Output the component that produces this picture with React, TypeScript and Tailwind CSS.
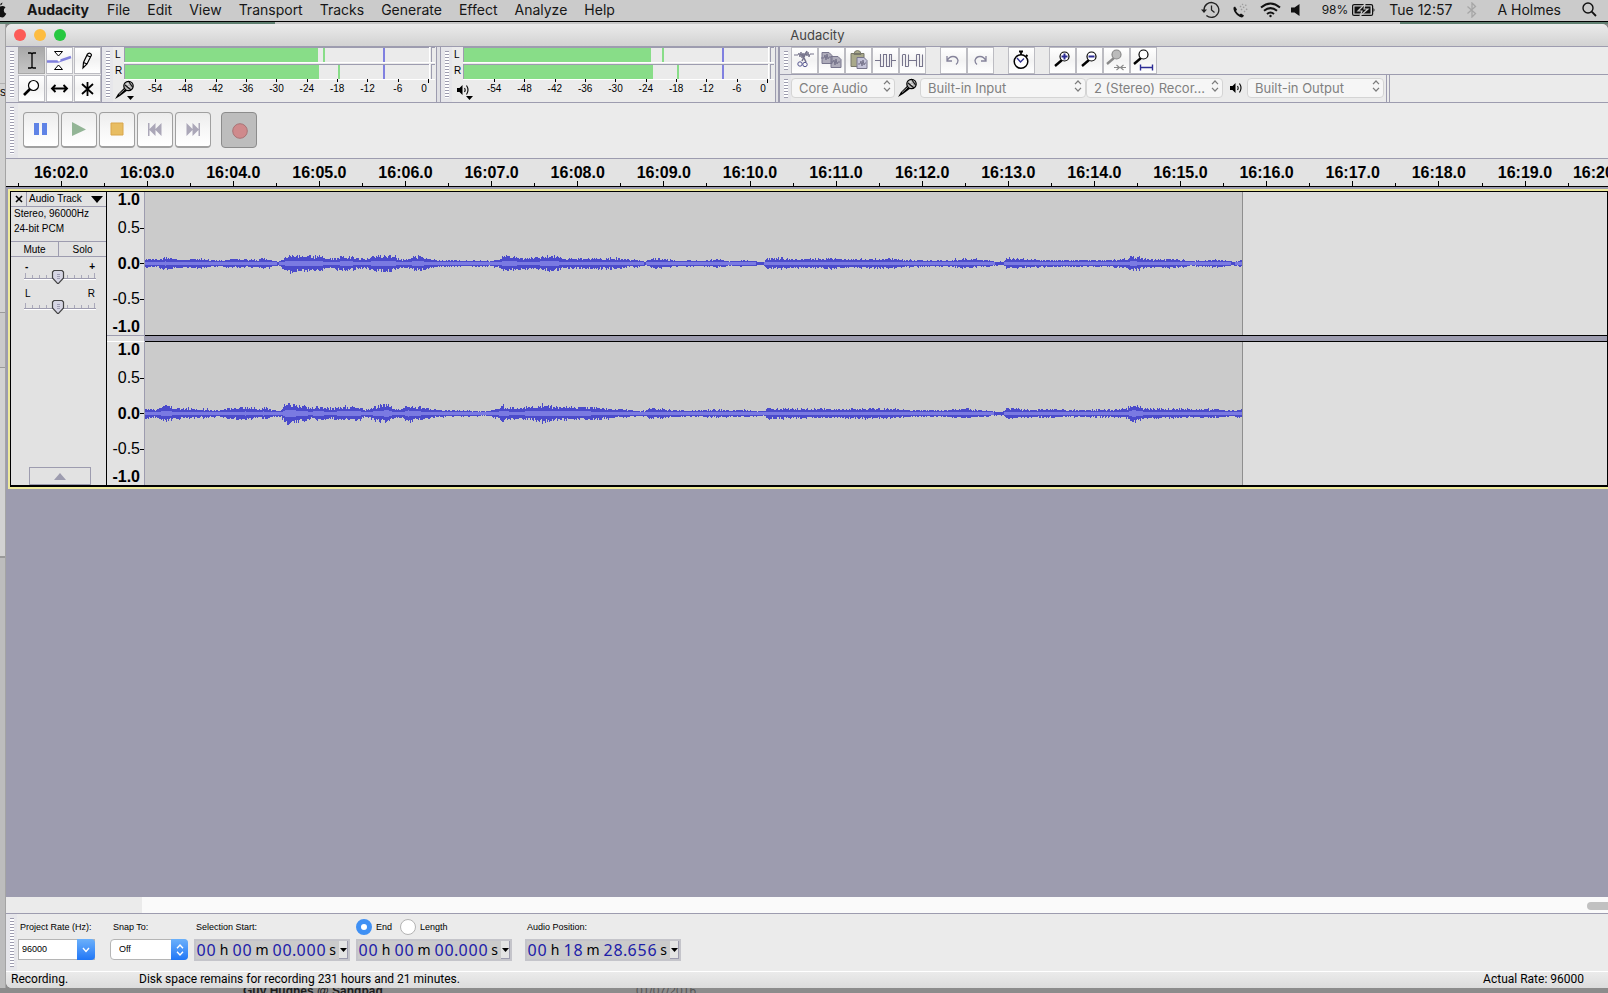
import React from 'react';

const PITCH = 86.12;
const DB_PITCH = 30.33;
const WAVE_WIDTH = 1097;

const MENUS = ['File', 'Edit', 'View', 'Transport', 'Tracks', 'Generate', 'Effect', 'Analyze', 'Help'];
const DB_LABELS = ['-54', '-48', '-42', '-36', '-30', '-24', '-18', '-12', '-6', '0'];
const TIMES = Array.from({ length: 18 }, (_, i) => `16:${String(i + 2).padStart(2, '0')}.0`);

type Point = [number, number];

// [x, half height] control points of the visible audio
const LEFT_ENVELOPE: Point[] = [
  [0, 4], [12, 3.5], [20, 6], [32, 4], [60, 4], [74, 2.5], [84, 4], [105, 4], [112, 3], [118, 5.5], [126, 3], [133, 1.5], [137, 5],
  [145, 8], [175, 7], [182, 4.5], [190, 5], [200, 7], [215, 5], [220, 4], [228, 7], [245, 8], [255, 4], [262, 4], [270, 7.5],
  [283, 5], [290, 3], [320, 2.5], [335, 3], [345, 2], [352, 3.5], [360, 7.5], [378, 5], [395, 6], [405, 8], [418, 5], [440, 5],
  [455, 4.5], [475, 5], [485, 3], [490, 3.5], [500, 1.5], [508, 5], [518, 4], [530, 2.5], [560, 2.5], [575, 3.5], [585, 2], [600, 3],
  [618, 1], [622, 5], [650, 4], [680, 5], [705, 4], [745, 4.5], [765, 3], [800, 2.5], [820, 4.5], [840, 3], [852, 1.5], [858, 1.5],
  [861, 5], [885, 3.5], [920, 3], [960, 3], [980, 4], [987, 7], [1000, 4], [1030, 4], [1045, 2], [1070, 3.5], [1080, 2.5], [1088, 1.5],
  [1094, 2.5], [1097, 2.5],
];
const RIGHT_ENVELOPE: Point[] = [
  [0, 5], [10, 3.5], [20, 8], [30, 5], [55, 4], [75, 3], [82, 5], [100, 6], [115, 3.5], [118, 6], [130, 2.5], [136, 3], [141, 11],
  [146, 9], [160, 7], [165, 5], [171, 7], [185, 5], [195, 6.5], [215, 6.5], [220, 3], [230, 7], [243, 9], [249, 4], [256, 4],
  [263, 8.5], [275, 6], [295, 3], [335, 2.2], [345, 2], [356, 7], [370, 5], [400, 8], [415, 6], [445, 6], [460, 5], [485, 3],
  [500, 2], [505, 5], [518, 4], [540, 2.5], [570, 3.5], [600, 3], [618, 2], [622, 5], [660, 4.5], [690, 4], [745, 5], [765, 3],
  [800, 3], [820, 4.5], [852, 1.5], [858, 1.5], [861, 5], [885, 3.5], [910, 4], [925, 3], [960, 3.5], [980, 4], [988, 9], [1000, 5],
  [1030, 4], [1070, 4], [1087, 2.5], [1097, 4],
];

function envelopeAt(points: Point[], x: number) {
  const i = points.findIndex((p) => p[0] >= x);
  if (i <= 0) return points[0][1];
  const [x0, y0] = points[i - 1];
  const [x1, y1] = points[i];
  return y0 + ((y1 - y0) * (x - x0)) / (x1 - x0);
}

function noise(n: number) {
  const v = Math.sin(n * 127.1 + 11.7) * 43758.5453;
  return v - Math.floor(v);
}

function wavePaths(points: Point[], seed: number) {
  let peak = '';
  let rms = '';
  for (let x = 0; x < WAVE_WIDTH; x++) {
    const h = envelopeAt(points, x);
    const spike = noise(x * 7 + seed) > 0.92 ? 1.2 : 1;
    const up = Math.max(1, Math.round(h * spike * (0.6 + 0.5 * noise(x + seed))));
    const down = Math.max(1, Math.round(h * spike * (0.6 + 0.5 * noise(x * 3 + seed + 500))));
    const r = h < 1.8 ? 0 : Math.max(2, Math.min(4, Math.round(h * 0.42)));
    peak += `M${x + 0.5} ${71 - up}V${72 + down}`;
    if (r) rms += `M${x + 0.5} ${72 - r}V${71 + r}`;
  }
  return { peak, rms };
}

function Grip({ className = '' }: { className?: string }) {
  return (
    <div className={`flex shrink-0 justify-center bg-[#e6e6ea] py-1 ${className}`}>
      <div className="w-1 bg-[repeating-linear-gradient(to_bottom,#9d9caf_0px,#9d9caf_1px,#ffffff_1px,#ffffff_3px)]" />
    </div>
  );
}

function ToolButton({ label, active, children }: { label: string; active?: boolean; children: React.ReactNode }) {
  return (
    <button
      type="button"
      aria-label={label}
      className={`flex h-[27px] w-[27px] shrink-0 items-center justify-center border ${
        active ? 'border-[#a8a8a8] bg-linear-to-b from-[#a9a9a9] to-[#c6c6c6]' : 'border-[#bcbcc2] bg-linear-to-b from-white via-[#f3f3f3] to-white'
      }`}
    >
      <svg width="25" height="25" viewBox="0 0 25 25" fill="none" stroke="#000" strokeWidth="1.4">
        {children}
      </svg>
    </button>
  );
}

function TransportButton({ label, children }: { label: string; children: React.ReactNode }) {
  return (
    <button
      type="button"
      aria-label={label}
      className="flex h-9 w-9 items-center justify-center rounded border border-b-2 border-[#a0a0a0] bg-linear-to-b from-[#ececec] via-[#f7f7f7] to-white"
    >
      <svg width="24" height="24" viewBox="0 0 24 24">
        {children}
      </svg>
    </button>
  );
}

function MicIcon() {
  return (
    <svg width="21" height="20" viewBox="0 0 21 20" className="shrink-0">
      <path d="M1 19 L4 14 L11 7 L14 10 L6 16 Z" fill="#000" />
      <path d="M5 14.5 L11 9" stroke="#999" strokeWidth="1" />
      <circle cx="14.5" cy="6" r="4.7" fill="#b5b5b5" stroke="#000" strokeWidth="1.2" />
      <path d="M11 5l6 5M15 2l3.500 5" stroke="#111" strokeWidth="1.2" />
      <path d="M12.500 4h2M14.500 6.500h1" stroke="#fff" strokeWidth="1.2" />
    </svg>
  );
}

function SpeakerIcon() {
  return (
    <svg width="14" height="14" viewBox="0 0 14 14">
      <path d="M1 5h2.5L6.5 2v10L3.500 9H1z" fill="#000" />
      <path d="M8.500 5q1.300 2 0 4M10.500 2.500q3 4.500 0 9" fill="none" stroke="#000" strokeWidth="1.100" />
    </svg>
  );
}

type MeterProps = {
  label: string;
  icon: React.ReactNode;
  levels: [number, number];
  holds: [number, number];
  peak: number;
};

function Meter({ label, icon, levels, holds, peak }: MeterProps) {
  return (
    <section aria-label={label} className="flex w-[335px] shrink-0 border-r border-[#9d9caf]">
      <Grip className="w-[11px]" />
      <div className="flex flex-col">
        <div className="flex">
          <div className="flex w-[11px] flex-col pl-0.5 text-[10px] leading-[16px]">
            <span>L</span>
            <span>R</span>
          </div>
          <svg width="311" height="36" viewBox="0 0 311 36" shapeRendering="crispEdges">
            {[0, 17].map((y, i) => (
              <g key={y}>
                <path d={`M0.500 ${y + 15}V${y + 0.5}H305M307.500 ${y + 15}V${y + 0.5}H311`} stroke="#9d9caf" fill="none" />
                <path d={`M0 ${y + 15.5}H311M305.500 ${y}V${y + 16}`} stroke="#fff" strokeWidth="1" />
                <rect x="1" y={y + 1} width={levels[i]} height="14" fill="#88dd88" />
                <rect x={holds[i]} y={y + 1} width="2" height="14" fill="#88dd88" />
                <rect x={peak} y={y + 1} width="2" height="14" fill="#8080e0" />
              </g>
            ))}
            {DB_LABELS.map((db, i) => (
              <rect key={db} x={Math.round(31 + i * DB_PITCH)} y="32" width="1" height={i === 9 ? 4 : 3} fill="#000" />
            ))}
          </svg>
        </div>
        <div className="flex">
          <button type="button" aria-label={`${label} options`} className="flex h-[17px] w-[27px] items-end pl-px">
            {icon}
            <svg width="7" height="4" viewBox="0 0 7 4" className="-ml-2 shrink-0">
              <path d="M0 0h7L3.500 4z" fill="#000" />
            </svg>
          </button>
          <div className="flex text-[10px] leading-[11px]">
            {DB_LABELS.map((db) => (
              <span key={db} className="text-center last:pr-2" style={{ width: DB_PITCH }}>
                {db}
              </span>
            ))}
          </div>
        </div>
      </div>
    </section>
  );
}

function DeviceSelect({ label, value, className }: { label: string; value: string; className: string }) {
  return (
    <div className={`relative shrink-0 ${className}`}>
      <select
        aria-label={label}
        className="h-5 w-full appearance-none rounded border border-[#d4d4d4] bg-[#f6f6f6] pl-[7px] font-[Inter,sans-serif] text-[13px] leading-4 text-[#808080]"
      >
        <option>{value}</option>
      </select>
      <svg width="8" height="12" viewBox="0 0 8 12" className="pointer-events-none absolute top-1 right-1" fill="none" stroke="#7c7c7c" strokeWidth="1.200">
        <path d="M1 4.200L4 1l3 3.200M1 7.800L4 11l3-3.200" />
      </svg>
    </div>
  );
}

function Lens({ muted }: { muted?: boolean }) {
  return (
    <>
      <path d="M5 18L12 12" stroke={muted ? '#888' : '#000'} strokeWidth="2.400" />
      <circle cx="14.500" cy="8.500" r="4.500" fill={muted ? '#bbb' : '#fff'} stroke={muted ? '#888' : '#000'} strokeWidth="1.200" />
    </>
  );
}

function EditToolbar() {
  return (
    <div className="flex h-[28px] border-b border-[#9d9caf]">
      <Grip className="w-[11px]" />
      <div className="flex gap-[14px]">
        <div className="flex">
          <ToolButton label="Cut">
            <g stroke="#77758c" strokeWidth="1">
              <path d="M2 7h4l1-2 1 4 1-5 1 6 1-5 1 4 1-4h1l1 3 1-4 1 5 1-3h4" />
              <path d="M15 3l-5 10M10 6l4 8" strokeWidth="1.600" />
              <circle cx="8" cy="16" r="2.200" stroke="#55558f" />
              <circle cx="13" cy="16.500" r="2.200" stroke="#55558f" />
            </g>
          </ToolButton>
          <ToolButton label="Copy">
            <g stroke="#77758c" strokeWidth="1" fill="#aeacba">
              <path d="M3 4.500h7l3 3v8H3zM12 8.500h7l3 3v8H12z" />
              <path d="M2 10h3l1-3 1 5 1-6 1 5 1-2h2M12 14h2l1-2 1 5 1-6 1 5 1-2h2" fill="none" />
            </g>
          </ToolButton>
          <ToolButton label="Paste">
            <g stroke="#77776a" strokeWidth="1" fill="#a9a98a">
              <path d="M5 5.500h13v13H5zM8 6.500q0-4 3.500-4t3.500 4z" />
              <path d="M11 9.500h7l3 3v8H11z" fill="#c4c3d8" stroke="#77758c" />
              <path d="M12 16h2l1-3 1 5 1-6 1 5 1-2h1" fill="none" stroke="#77758c" />
            </g>
          </ToolButton>
          <ToolButton label="Trim">
            <path d="M2 12.500h5M19 12.500h4M7.500 6v13M10.500 6v13M13.500 6v13M16.500 6v13M18.500 6v13M7.500 18.500h3M10.500 6.500h3M13.500 18.500h3M16.500 6.500h2" stroke="#77758c" strokeWidth="1.100" />
          </ToolButton>
          <ToolButton label="Silence">
            <path d="M2.500 7v11M2.500 6.500h3M5.500 6.500v12h3M8.500 18.500v-12M8.500 12.500h8M16.500 6.500v12M16.500 6.500h3v12h3v-12" stroke="#77758c" strokeWidth="1.100" />
          </ToolButton>
        </div>
        <div className="flex">
          <ToolButton label="Undo">
            <path d="M6 8v5h5M6 13q2-4.500 6-4.500t5 4q0 2.500-2 4" stroke="#85839a" strokeWidth="1.300" />
          </ToolButton>
          <ToolButton label="Redo">
            <path d="M18 8v5h-5M18 13q-2-4.500-6-4.500t-5 4q0 2.500 2 4" stroke="#85839a" strokeWidth="1.300" />
          </ToolButton>
        </div>
        <ToolButton label="Sync lock">
          <circle cx="12" cy="13.500" r="6.800" fill="#fff" strokeWidth="1.500" />
          <path d="M10 3.500h4M12 4v3M17 7l1.500 1.500" strokeWidth="1.800" />
          <path d="M8 10l3.500 4L15 10.500" stroke="#33338f" />
        </ToolButton>
        <div className="flex">
          <ToolButton label="Zoom in">
            <Lens />
            <path d="M11.500 8.500h6M14.500 5.500v6" stroke="#2c2c94" strokeWidth="2" />
          </ToolButton>
          <ToolButton label="Zoom out">
            <Lens />
            <path d="M11.500 8.500h6" stroke="#2c2c94" strokeWidth="2" />
          </ToolButton>
          <ToolButton label="Fit selection">
            <g transform="translate(-2 -2)">
              <Lens muted />
            </g>
            <path d="M10 19.500h5M12.500 17l3 2.500-3 2.500M22 19.500h-5M19.500 17l-3 2.500 3 2.500" stroke="#888" strokeWidth="1.100" />
          </ToolButton>
          <ToolButton label="Fit project">
            <g transform="translate(-2 -2)">
              <Lens />
            </g>
            <path d="M9.500 16.500v6M21.500 16.500v6M9 19.500h13" stroke="#2c2c94" strokeWidth="1.400" />
          </ToolButton>
        </div>
      </div>
    </div>
  );
}

function TimeField({ label, value }: { label: string; value: [string, string, string, string] }) {
  const digits = (text: string) =>
    text.split('').map((d, i) => (
      <span key={i} className="w-[10px] text-center text-[#2020a8]">
        {d}
      </span>
    ));
  return (
    <div role="group" aria-label={label} className="flex h-[22px] w-[156px] items-center border-2 border-[#c4c4ca] bg-[#cbcbcb] font-['Noto_Sans',sans-serif] text-[16px] leading-[18px]">
      {digits(value[0])}
      <span className="w-4 text-center text-[14px]">h</span>
      {digits(value[1])}
      <span className="w-5 text-center text-[14px]">m</span>
      {digits(value[2])}
      <span className="w-1 text-center text-[#2020a8]">.</span>
      {digits(value[3])}
      <span className="w-[13px] text-center text-[14px]">s</span>
      <button type="button" aria-label={`${label} format`} className="flex h-[18px] flex-1 items-center justify-center border-r border-b border-[#9d9caf] bg-[#e4e4e4]">
        <svg width="7" height="4" viewBox="0 0 7 4">
          <path d="M0 0h7L3.500 4z" fill="#000" />
        </svg>
      </button>
    </div>
  );
}

function TrackSlider({ label, low, high, labelClass }: { label: string; low: string; high: string; labelClass: string }) {
  return (
    <div className="flex h-[30px] flex-col pr-[10px] pl-[13px]">
      <div className={`flex h-[10px] justify-between px-px text-[10px] ${labelClass}`}>
        <span>{low}</span>
        <span>{high}</span>
      </div>
      <div className="relative w-[72px]">
        <svg width="72" height="16" viewBox="0 0 72 16">
          <path d="M1.500 4v5M8.500 6v3M15.500 6v3M22.500 6v3M29.500 6v3M43.500 6v3M50.500 6v3M57.500 6v3M64.500 6v3M70.500 4v5" stroke="#aaa9ba" />
          <path d="M0 9.500h72" stroke="#9d9caf" />
          <path d="M0 10.500h72" stroke="#fff" />
          <path d="M30 1.500h8l1.500 1.500v6l-5 5.500h-1l-5-5.500V3z" fill="#d6d6e4" stroke="#444" strokeWidth="1.200" />
          <path d="M33 5.500h3M33 7.500h3M33 9.500h3" stroke="#8f8ea6" strokeWidth="0.800" />
        </svg>
        <input
          type="range"
          aria-label={label}
          defaultValue={47}
          className="absolute inset-0 h-4 w-full appearance-none bg-transparent [&::-webkit-slider-thumb]:h-4 [&::-webkit-slider-thumb]:w-3 [&::-webkit-slider-thumb]:appearance-none"
        />
      </div>
    </div>
  );
}

function TrackPanel() {
  return (
    <div className="flex w-[96px] shrink-0 flex-col border-r border-black bg-[#e2e2e2] text-[10px]">
      <div className="flex h-[15px] border-b border-[#9d9caf]">
        <button type="button" aria-label="Close track" className="flex w-4 items-center justify-center border-r border-[#9d9caf]">
          <svg width="8" height="8" viewBox="0 0 8 8">
            <path d="M1 1l6 6M7 1L1 7" stroke="#000" strokeWidth="1.600" />
          </svg>
        </button>
        <button type="button" className="flex flex-1 items-center justify-between pr-[3px] pl-0.5 leading-[14px]">
          Audio Track
          <svg width="12" height="7" viewBox="0 0 12 7">
            <path d="M0 0h12L6 7z" fill="#000" />
          </svg>
        </button>
      </div>
      <p className="pl-[3px] leading-[13px]">Stereo, 96000Hz</p>
      <p className="h-[21px] pl-[3px] leading-[18px]">24-bit PCM</p>
      <div className="flex h-4 border-y border-[#9d9caf]">
        <button type="button" className="flex-1 border-r border-[#9d9caf] leading-[13px]">Mute</button>
        <button type="button" className="flex-1 leading-[13px]">Solo</button>
      </div>
      <div className="pt-0.5">
        <TrackSlider label="Gain" low="-" high="+" labelClass="font-bold leading-4" />
        <TrackSlider label="Pan" low="L" high="R" labelClass="leading-[10px]" />
      </div>
      <button type="button" aria-label="Collapse track" className="mt-auto mr-[15px] ml-[18px] flex h-[18px] items-center justify-center border border-[#9d9caf]">
        <svg width="12" height="7" viewBox="0 0 12 7">
          <path d="M6 0l6 7H0z" fill="#9d9caf" />
        </svg>
      </button>
    </div>
  );
}

function ScaleMark({ value, bold, tick }: { value: string; bold?: boolean; tick?: boolean }) {
  return (
    <div className="flex items-center justify-end">
      <span className={bold ? 'font-bold' : ''}>{value}</span>
      <span className={tick ? 'h-px w-1 bg-black' : 'w-1'} />
    </div>
  );
}

function Channel({ name, points, seed }: { name: string; points: Point[]; seed: number }) {
  const { peak, rms } = wavePaths(points, seed);
  return (
    <div className="flex h-[143px]">
      <div className="grid w-[38px] shrink-0 grid-rows-[16px_40px_31px_40px_16px] border-r border-[#9d9caf] bg-[#e2e2e2] text-[16px] leading-4">
        <ScaleMark value="1.0" bold />
        <ScaleMark value="0.5" tick />
        <ScaleMark value="0.0" bold tick />
        <ScaleMark value="-0.5" tick />
        <ScaleMark value="-1.0" bold />
      </div>
      <div className="shrink-0 border-r border-[#8f8f8f] bg-[#cbcbcb]">
        <svg role="img" aria-label={name} width={WAVE_WIDTH} height="143" viewBox={`0 0 ${WAVE_WIDTH} 143`} shapeRendering="crispEdges">
          <path d={peak} stroke="#4b4bcb" />
          <path d={rms} stroke="#7a7ae2" />
        </svg>
      </div>
      <div className="flex-1 bg-[#dedede]" />
    </div>
  );
}

function Ruler() {
  return (
    <div className="flex h-[28px] shrink-0 flex-col justify-between overflow-hidden border-b border-black bg-[#e3e3e3]">
      <div className="flex pt-[5px] pl-[12px] text-[16px] leading-[18px] font-bold">
        {TIMES.map((t) => (
          <span key={t} className="shrink-0 text-center" style={{ width: PITCH }}>
            {t}
          </span>
        ))}
        <span className="shrink-0 pl-[5px]">16:20.0</span>
      </div>
      <svg width="1660" height="5" viewBox="0 0 1660 5" shapeRendering="crispEdges" className="-mt-2 shrink-0">
        {Array.from({ length: 38 }, (_, i) => (
          <rect key={i} x={Math.floor(12 + (i * PITCH) / 2)} y={i % 2 ? 0 : 2} width="1" height="5" fill="#000" />
        ))}
      </svg>
    </div>
  );
}

function MenuBar() {
  return (
    <header className="flex h-[22px] shrink-0 items-center border-b border-black bg-[#cbcbcb] pb-0.5 font-[Inter,sans-serif] text-[14px] leading-5 text-[#161616]">
      <svg width="7" height="16" viewBox="0 0 7 16" className="shrink-0">
        <path d="M0 4.500q3-1.500 5.500.8Q3.500 7 3.800 8.800 4 10.600 6.300 11.800 4.500 15.500 2.300 15.500L0 15z" fill="#111" />
        <path d="M0 3.500Q.3 1.200 2.500.5 2.500 2.800 0 3.500z" fill="#111" />
      </svg>
      <nav className="flex gap-[17px] pl-5">
        <a href="#audacity" className="pr-px font-bold">Audacity</a>
        {MENUS.map((m) => (
          <a key={m} href={`#${m.toLowerCase()}`}>{m}</a>
        ))}
      </nav>
      <div className="ml-auto flex items-center pr-[11px]">
        <svg width="19" height="18" viewBox="0 0 19 18" fill="none" stroke="#222" strokeWidth="1.300">
          <path d="M3 9a7.400 7.400 0 1 1 2.400 5.400" />
          <path d="M0 8.500h6L3 12z" fill="#222" stroke="none" />
          <path d="M10.500 4.500V9l3 2.500" />
        </svg>
        <svg width="17" height="18" viewBox="0 0 17 18" className="ml-3">
          <path d="M1.500 6.500l1.500-1 2 3-1 1.500q1.500 2.500 3.500 3.500l1.500-1 3 2-1 1.500Q9 17.500 5 14 1 10 1.500 6.500z" fill="#111" />
          <path d="M9 9l6-6M8 6l3-3M12 11l4-4" stroke="#9c9c9c" strokeWidth="1.300" strokeDasharray="1.500 1.500" />
        </svg>
        <svg width="21" height="16" viewBox="0 0 21 16" fill="none" stroke="#111" strokeWidth="2" className="ml-[11px]">
          <path d="M1 5.500q9.500-8 19 0M4 8.800q6.500-5.400 13 0M7 12q3.500-2.900 7 0" />
          <circle cx="10.500" cy="14" r="1.200" fill="#111" stroke="none" />
        </svg>
        <svg width="10" height="12" viewBox="0 0 10 12" className="ml-[10px]">
          <path d="M0 3.500h3.500L8.500 0v12L3.500 8.500H0z" fill="#111" />
        </svg>
        <span className="ml-[21px] text-[12px]">98%</span>
        <svg width="24" height="14" viewBox="0 0 24 14" className="ml-1">
          <rect x="0.600" y="1.600" width="20" height="10.800" rx="1.500" fill="none" stroke="#111" strokeWidth="1.200" />
          <rect x="2.500" y="3.500" width="16" height="7" fill="#111" />
          <path d="M21.500 5q2 2 0 4z" fill="#111" />
          <path d="M13 1l-7 7h4l-2 5 8-7h-4z" fill="#111" stroke="#cbcbcb" strokeWidth="1.200" />
        </svg>
        <span className="ml-[13px]">Tue 12:57</span>
        <svg width="12" height="16" viewBox="0 0 12 16" fill="none" stroke="#a6a6a6" strokeWidth="1.300" className="ml-[14px]">
          <path d="M1.500 4.500l8 7L6 15V1l3.500 3.500-8 7" />
        </svg>
        <span className="ml-[19px]">A Holmes</span>
        <svg width="15" height="15" viewBox="0 0 15 15" fill="none" stroke="#111" strokeWidth="1.400" className="ml-[21px]">
          <circle cx="6" cy="6" r="5" />
          <path d="M9.700 9.700L14 14" strokeWidth="1.800" />
        </svg>
      </div>
    </header>
  );
}

function SelectionBar() {
  return (
    <div className="flex h-[58px] shrink-0 border-t border-[#9d9caf] text-[9px] leading-[11px]">
      <Grip className="w-[11px]" />
      <div className="flex items-start pt-[5px] pl-px">
        <div className="flex w-[77px] flex-col gap-1">
          <label htmlFor="rate" className="h-4 pl-0.5 leading-4">Project Rate (Hz):</label>
          <div className="flex h-[21px] border border-[#b5b5b5] bg-white">
            <input id="rate" defaultValue="96000" className="w-[58px] pl-[3px]" />
            <button type="button" aria-label="Choose rate" className="-my-px -mr-px flex flex-1 items-center justify-center rounded-r bg-linear-to-b from-[#6bb0fa] to-[#1f76f6]">
              <svg width="8" height="6" viewBox="0 0 8 6" fill="none" stroke="#fff" strokeWidth="1.400">
                <path d="M1 1l3 3.500L7 1" />
              </svg>
            </button>
          </div>
        </div>
        <div className="ml-[15px] flex w-[78px] flex-col gap-1">
          <label htmlFor="snap" className="h-4 pl-[3px] leading-4">Snap To:</label>
          <div className="relative flex">
            <select id="snap" className="h-[21px] w-full appearance-none rounded border border-[#b5b5b5] bg-white pl-2">
              <option>Off</option>
            </select>
            <div className="pointer-events-none absolute top-0 right-0 flex h-[21px] w-[17px] items-center justify-center rounded-r bg-linear-to-b from-[#6bb0fa] to-[#1f76f6]">
              <svg width="8" height="12" viewBox="0 0 8 12" fill="none" stroke="#fff" strokeWidth="1.400">
                <path d="M1 4.200L4 1l3 3.200M1 7.800L4 11l3-3.200" />
              </svg>
            </div>
          </div>
        </div>
        <div className="ml-1.5 flex flex-col gap-1">
          <span className="h-4 pl-0.5 leading-4">Selection Start:</span>
          <TimeField label="Selection start" value={['00', '00', '00', '000']} />
        </div>
        <div className="ml-1.5 flex flex-col gap-1">
          <div className="flex h-4 items-center">
            <input id="end" type="radio" name="mode" defaultChecked className="h-4 w-4 appearance-none rounded-full border border-[#b4b4b4] bg-white checked:border-[5px] checked:border-[#3f90f4]" />
            <label htmlFor="end" className="pl-1">End</label>
            <input id="length" type="radio" name="mode" className="ml-2 h-4 w-4 appearance-none rounded-full border border-[#b4b4b4] bg-white checked:border-[5px] checked:border-[#3f90f4]" />
            <label htmlFor="length" className="pl-1">Length</label>
          </div>
          <TimeField label="Selection end" value={['00', '00', '00', '000']} />
        </div>
        <div className="ml-[13px] flex flex-col gap-1">
          <span className="h-4 pl-0.5 leading-4">Audio Position:</span>
          <TimeField label="Audio position" value={['00', '18', '28', '656']} />
        </div>
      </div>
    </div>
  );
}

export default function App() {
  return (
    <div className="flex h-screen flex-col overflow-hidden bg-[#8c8c8c] font-['Liberation_Sans',Arial,sans-serif] text-black">
      <MenuBar />
      <div className="flex h-0.5 shrink-0">
        <div className="w-[275px] bg-[#5f7f70]" />
        <div className="flex-1 bg-[#c8c8c8]" />
        <div className="w-[208px] bg-[#5f7f70]" />
      </div>
      <div className="flex min-h-0 flex-1">
        {/* sliver of the window behind */}
        <div className="flex w-1.5 shrink-0 flex-col overflow-hidden border-r border-[#a4a4a4] bg-[#d2d2d2] text-[12px] leading-4">
          <div className="h-[60px] border-b border-[#b0b0b0]" />
          <span className="h-[228px]">s</span>
          <div className="h-[56px] border-y border-[#9a9a9a] bg-[#cacaca]" />
          <div className="h-[190px] border-b-2 border-[#9a9a9a]" />
          <div className="flex-1 bg-[#bdbdbd]" />
        </div>
        <main className="flex min-w-0 flex-1 flex-col overflow-hidden rounded-t-md rounded-bl-md bg-[#ebebeb]">
          <div className="flex h-[23px] shrink-0 items-center border-b border-[#9d9caf] bg-linear-to-b from-[#ebebeb] to-[#d2d2d2]">
            <div className="flex w-[60px] gap-2 pl-2">
              <button type="button" aria-label="Close" className="h-3 w-3 rounded-full bg-[#fc5b57]" />
              <button type="button" aria-label="Minimize" className="h-3 w-3 rounded-full bg-[#fdbc40]" />
              <button type="button" aria-label="Zoom" className="h-3 w-3 rounded-full bg-[#27c840]" />
            </div>
            <h1 className="flex-1 pr-[39px] text-center font-[Inter,sans-serif] text-[13px] leading-5 text-[#444]">Audacity</h1>
          </div>

          <div className="flex h-14 shrink-0 border-b border-[#9d9caf]">
            <div className="flex w-[96px] shrink-0 border-r border-[#9d9caf]">
              <Grip className="w-3" />
              <div className="grid grid-cols-3 gap-px">
                <ToolButton label="Selection tool" active>
                  <path d="M9 5h3l1 1 1-1h3M9 20h3l1-1 1 1h3M13 6v13" strokeWidth="1.300" />
                </ToolButton>
                <ToolButton label="Envelope tool">
                  <path d="M0 13.500h11L24 9" stroke="#8080dd" strokeWidth="2.600" />
                  <path d="M7.500 3.500h8l-4 4.500zM7.500 21.500h8l-4-4.500z" fill="#fff" strokeWidth="1" />
                  <circle cx="12" cy="12" r="1.500" fill="#fff" stroke="none" />
                </ToolButton>
                <ToolButton label="Draw tool">
                  <path d="M8 20l.5-5.500 4-8.500q3-2 4 1L12 16zM8.500 14.500l3.500 1.500M12 7.500l3.500 1.500" strokeWidth="1.200" />
                </ToolButton>
                <ToolButton label="Zoom tool">
                  <path d="M5 19L12 12" strokeWidth="2.600" />
                  <circle cx="14.500" cy="9.500" r="5" fill="#fff" strokeWidth="1.200" />
                </ToolButton>
                <ToolButton label="Time shift tool">
                  <path d="M5 12.500h15M8.500 9L5 12.500 8.500 16M16.500 9l3.500 3.500-3.500 3.500" strokeWidth="1.900" />
                </ToolButton>
                <ToolButton label="Multi tool">
                  <path d="M12.500 6v14M7 8l5.500 5L18 8M7 18l5.500-5 5.500 5" strokeWidth="1.800" />
                </ToolButton>
              </div>
            </div>
            <Meter label="Recording level" icon={<MicIcon />} levels={[193, 194]} holds={[199, 214]} peak={259} />
            <div className="w-1 shrink-0 border-r border-[#9d9caf] bg-[#e0e0e4]" />
            <Meter label="Playback level" icon={<span className="self-start pr-1 pl-[3px]"><SpeakerIcon /></span>} levels={[187, 189]} holds={[199, 214]} peak={259} />
            <div className="w-1 shrink-0 border-r-2 border-[#9d9caf] bg-[#e0e0e4]" />
            <div className="flex min-w-0 flex-1 flex-col">
              <EditToolbar />
              <div className="flex h-[27px] items-center">
                <Grip className="w-[11px] self-stretch" />
                <div className="flex items-center self-stretch pb-0.5">
                  <DeviceSelect label="Audio host" value="Core Audio" className="w-[104px]" />
                  <div className="mx-0.5">
                    <MicIcon />
                  </div>
                  <DeviceSelect label="Recording device" value="Built-in Input" className="w-[166px]" />
                  <DeviceSelect label="Recording channels" value="2 (Stereo) Recor..." className="w-[137px]" />
                  <div className="mr-1 ml-1.5">
                    <SpeakerIcon />
                  </div>
                  <DeviceSelect label="Playback device" value="Built-in Output" className="w-[137px]" />
                </div>
                <div className="ml-0.5 w-1 self-stretch border-x border-[#9d9caf]" />
              </div>
            </div>
          </div>

          <div className="flex h-14 shrink-0 items-center border-b border-[#9d9caf]">
            <Grip className="w-3 self-stretch" />
            <div className="flex items-center pb-0.5 pl-[5px]">
              <div className="flex gap-0.5">
                <TransportButton label="Pause">
                  <path d="M5 6h5v12H5zM13 6h5v12h-5z" fill="#5f83e6" />
                </TransportButton>
                <TransportButton label="Play">
                  <path d="M5 5l14 7.500L5 19z" fill="#93b596" />
                </TransportButton>
                <TransportButton label="Stop">
                  <path d="M6 6h12v12H6z" fill="#e8bd62" stroke="#d9a64a" />
                </TransportButton>
                <TransportButton label="Skip to start">
                  <path d="M5 6v13h1.500v-6l6 6v-6l6 6V6l-6 6V6l-6 6V6z" fill="#aba7b8" />
                </TransportButton>
                <TransportButton label="Skip to end">
                  <path d="M19 6v13h-1.500v-6l-6 6v-6l-6 6V6l6 6V6l6 6V6z" fill="#aba7b8" />
                </TransportButton>
              </div>
              <button type="button" aria-label="Record" className="ml-[10px] flex h-9 w-9 items-center justify-center rounded border border-[#8c8c8c] bg-[#bdbdbd]">
                <svg width="20" height="20" viewBox="0 0 20 20">
                  <circle cx="11" cy="11" r="7.300" fill="#cf8a8c" stroke="#a87476" />
                </svg>
              </button>
            </div>
          </div>

          <Ruler />

          <div className="flex min-h-0 flex-1 flex-col bg-[#9d9caf] pt-0.5 pl-0.5">
            <div className="border-y-2 border-l-2 border-[#eeea9c]">
              <div className="flex border border-b-2 border-black">
                <TrackPanel />
                <div className="min-w-0 flex-1">
                  <Channel name="Left channel" points={LEFT_ENVELOPE} seed={3} />
                  <div className="flex h-[7px]">
                    <div className="w-[38px] border-t border-r border-b border-[#9d9caf] border-b-white bg-[#e2e2e2]" />
                    <div className="flex-1 border-y border-black bg-[#9d9caf]" />
                  </div>
                  <Channel name="Right channel" points={RIGHT_ENVELOPE} seed={71} />
                </div>
              </div>
            </div>
          </div>

          <div className="flex h-4 shrink-0 items-center bg-[#ebebeb]">
            <div className="ml-[136px] flex h-full flex-1 items-center justify-end bg-[#fafafa] pt-0.5">
              <div className="h-2 w-[21px] rounded-l-full bg-[#c1c1c1]" />
            </div>
          </div>

          <SelectionBar />

          <footer className="flex h-[17px] shrink-0 items-center border-t border-white bg-linear-to-b from-[#ebebeb] to-[#dcdcdc] pr-6 pb-0.5 pl-[5px] font-[Roboto,sans-serif] text-[12px] leading-[14px]">
            <span className="w-[128px]">Recording.</span>
            <span className="flex-1">Disk space remains for recording 231 hours and 21 minutes.</span>
            <span>Actual Rate: 96000</span>
          </footer>
        </main>
      </div>
      <div className="flex h-[5px] shrink-0 overflow-hidden bg-[#8c8c8c] pl-[243px] text-[12px] leading-[6px] text-[#1c1c1c]">
        <span className="w-[393px] font-bold">Guy Hughes @ Sandbag</span>
        <span className="text-[#555]">01/07/2016</span>
      </div>
    </div>
  );
}
